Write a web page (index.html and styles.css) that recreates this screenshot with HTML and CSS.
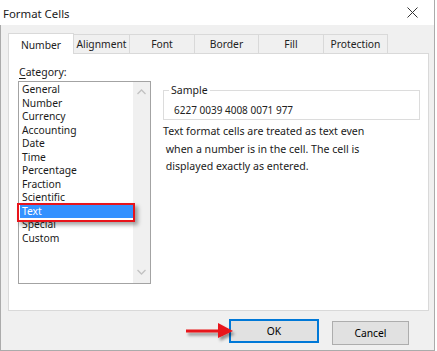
FILE: index.html
```html
<!DOCTYPE html>
<html lang="en">
  <head>
    <meta charset="UTF-8" />
    <title>Format Cells</title>
    <link rel="stylesheet" href="styles.css">
  </head>
  <body>
    <div class="window">
      <div class="titlebar">
        <span class="title">Format Cells</span>
        <svg class="close" width="11" height="11" viewBox="0 0 11 11">
          <path d="M0.5 0.5 L10.5 10.5 M10.5 0.5 L0.5 10.5" stroke="#333" stroke-width="1" />
        </svg>
      </div>

      <div class="tabs">
        <div class="tab active">Number</div>
        <div class="tab">Alignment</div>
        <div class="tab">Font</div>
        <div class="tab">Border</div>
        <div class="tab">Fill</div>
        <div class="tab">Protection</div>
      </div>

      <div class="panel">
        <div class="left">
          <div class="label"><u>C</u>ategory:</div>
          <div class="listbox">
            <ul class="items">
              <li>General</li>
              <li>Number</li>
              <li>Currency</li>
              <li>Accounting</li>
              <li>Date</li>
              <li>Time</li>
              <li>Percentage</li>
              <li>Fraction</li>
              <li>Scientific</li>
              <li class="selected">Text<span class="callout"></span></li>
              <li>Special</li>
              <li>Custom</li>
            </ul>
            <div class="scrollbar">
              <svg width="9" height="6" viewBox="0 0 9 6">
                <path d="M0.5 5 L4.5 1 L8.5 5" fill="none" stroke="#c2c2c2" stroke-width="1.3" />
              </svg>
              <svg width="9" height="6" viewBox="0 0 9 6">
                <path d="M0.5 1 L4.5 5 L8.5 1" fill="none" stroke="#c2c2c2" stroke-width="1.3" />
              </svg>
            </div>
          </div>
        </div>

        <div class="right">
          <fieldset class="sample">
            <legend>Sample</legend>
            <div class="sample-value">6227 0039 4008 0071 977</div>
          </fieldset>
          <p class="desc">
            Text format cells are treated as text even<br />
            &nbsp;when a number is in the cell. The cell is<br />
            &nbsp;displayed exactly as entered.
          </p>
        </div>
      </div>

      <div class="footer">
        <svg class="arrow" width="56" height="24" viewBox="0 0 56 24">
          <defs>
            <filter id="shade" x="-20%" y="-40%" width="140%" height="180%">
              <feDropShadow dx="2" dy="3" stdDeviation="1.5" flood-color="#000" flood-opacity="0.4" />
            </filter>
          </defs>
          <g filter="url(#shade)">
            <rect x="1" y="8.5" width="34" height="3" fill="#e8141b" />
            <path d="M33 2 L48 10 L33 17 Z" fill="#e8141b" />
          </g>
        </svg>
        <button class="btn ok">OK</button>
        <button class="btn cancel">Cancel</button>
      </div>
    </div>
  </body>
</html>
```

FILE: styles.css
```css
body {
  margin: 0;
  background-color: white;
  font-family: "Noto Sans", "Open Sans", sans-serif;
  color: #1a1a1a;
}
.window {
  width: 435px;
  height: 351px;
  box-sizing: border-box;
  background-color: #f0f0f0;
  border-left: 1px solid #ababab;
  border-right: 1px solid #ababab;
  border-bottom: 1px solid #ababab;
}
.titlebar {
  height: 25px;
  background-color: white;
  display: flex;
  align-items: center;
  justify-content: space-between;
  margin-left: -1px;
}
.title {
  font-size: 11.4px;
  padding-left: 3px;
  padding-top: 1px;
}
.close {
  margin-right: 16px;
}
.tabs {
  display: flex;
  align-items: flex-end;
  height: 20px;
  margin-top: 8px;
  padding-left: 7px;
}
.tab {
  height: 19px;
  box-sizing: border-box;
  border: 1px solid #d9d9d9;
  border-bottom: none;
  margin-left: -1px;
  font-size: 10.3px;
  display: flex;
  align-items: center;
  justify-content: center;
  color: #222;
}
.tab:nth-child(1) { width: 66px; margin-left: 0; }
.tab:nth-child(2) { width: 57px; }
.tab:nth-child(3) { width: 66px; }
.tab:nth-child(4) { width: 65px; }
.tab:nth-child(5) { width: 66px; }
.tab:nth-child(6) { width: 65px; }
.tab.active {
  height: 21px;
  margin-bottom: -1px;
  background-color: white;
  position: relative;
  z-index: 1;
  padding-top: 1px;
}
.panel {
  width: 421px;
  height: 258px;
  box-sizing: border-box;
  margin-left: 7px;
  background-color: white;
  border: 1px solid #d9d9d9;
  display: flex;
}
.left {
  padding: 11px 0 0 9px;
}
.label {
  font-size: 10.5px;
  line-height: 14px;
  margin-bottom: 2px;
  padding-left: 1px;
}
.label u {
  text-decoration-thickness: 1px;
  text-underline-offset: 2px;
}
.listbox {
  width: 133px;
  height: 203px;
  box-sizing: border-box;
  border: 1px solid #a3a3a3;
  display: flex;
}
.items {
  list-style: none;
  margin: 0;
  padding: 1px 0 0 1px;
  flex: 1;
}
.items li {
  font-size: 10.3px;
  line-height: 13.5px;
  height: 13.5px;
  padding-left: 2px;
}
.items li.selected {
  background-color: #3391ff;
  color: white;
  position: relative;
}
.callout {
  position: absolute;
  left: -3px;
  top: -2px;
  width: 118px;
  height: 19px;
  box-sizing: border-box;
  border: 2px solid #e8141b;
  box-shadow: 3px 3px 4px rgba(0, 0, 0, 0.35);
}
.scrollbar {
  width: 17px;
  background-color: #f0f0f0;
  display: flex;
  flex-direction: column;
  justify-content: space-between;
  align-items: center;
  padding: 7px 0 8px;
}
.right {
  margin-left: 12px;
  padding-top: 29px;
}
.sample {
  width: 257px;
  box-sizing: border-box;
  margin: 0;
  padding: 6px 10px 2px;
  border: 1px solid #dcdcdc;
}
.sample legend {
  font-size: 10.5px;
  line-height: 14px;
  padding: 0 2px;
  margin-left: -5px;
}
.sample-value {
  font-size: 10px;
  line-height: 14px;
  color: #222;
}
.desc {
  margin: 3px 0 0;
  font-size: 10.6px;
  line-height: 17.5px;
}
.footer {
  display: flex;
  justify-content: flex-end;
  align-items: flex-start;
  padding: 8px 25px 0 0;
  gap: 13px;
  position: relative;
}
.btn {
  font-family: inherit;
  font-size: 10.3px;
  background-color: #e1e1e1;
  border: 1px solid #adadad;
  padding: 0;
  color: #000;
}
.ok {
  width: 90px;
  height: 24px;
  border: 2px solid #0078d7;
}
.cancel {
  width: 77px;
  height: 24px;
  margin-top: 2px;
}
.arrow {
  position: absolute;
  left: 184px;
  top: 10px;
}
```
